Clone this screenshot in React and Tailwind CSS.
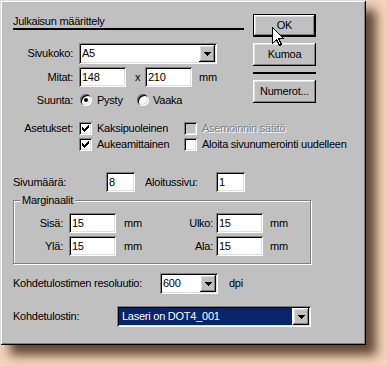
const sunken =
  'bg-white shadow-[inset_1px_1px_0_#808080,inset_-1px_-1px_0_#fff,inset_2px_2px_0_#000,inset_-2px_-2px_0_#dfdfdf]'
const raised =
  'bg-[#c0c0c0] shadow-[inset_-1px_-1px_0_#000,inset_1px_1px_0_#fff,inset_-2px_-2px_0_#808080,inset_2px_2px_0_#dfdfdf]'

function Arrow() {
  return (
    <div className={`${raised} w-[16px] h-full flex items-center justify-center`}>
      <svg width="7" height="4" viewBox="0 0 7 4" shapeRendering="crispEdges">
        <path d="M0 0h7v1H0z M1 1h5v1H1z M2 2h3v1H2z M3 3h1v1H3z" fill="#000" />
      </svg>
    </div>
  )
}

function Combo({ className, children, selected }) {
  return (
    <div className={`${sunken} flex h-[21px] p-[2px] ${className}`}>
      {selected ? (
        <div className="flex-1 flex items-center bg-[#0a246a] text-white pl-[3px] mr-[1px]">{children}</div>
      ) : (
        <div className="flex-1 flex items-center pl-[1px]">{children}</div>
      )}
      <Arrow />
    </div>
  )
}

function Edit({ className, children }) {
  return <div className={`${sunken} h-[20px] flex items-center pl-[3px] ${className}`}>{children}</div>
}

function Check({ checked, disabled }) {
  return (
    <div
      className={`w-[13px] h-[13px] shrink-0 shadow-[inset_1px_1px_0_#808080,inset_-1px_-1px_0_#fff,inset_2px_2px_0_#000,inset_-2px_-2px_0_#dfdfdf] ${
        disabled ? 'bg-[#c0c0c0]' : 'bg-white'
      }`}
    >
      {checked && (
        <svg width="13" height="13" viewBox="0 0 13 13" shapeRendering="crispEdges">
          <path d="M3 5h1v3H3z M4 6h1v3H4z M5 7h1v3H5z M6 6h1v3H6z M7 5h1v3H7z M8 4h1v3H8z M9 3h1v3H9z" fill="#000" />
        </svg>
      )}
    </div>
  )
}

function Radio({ on }) {
  return (
    <div className="w-[12px] h-[12px] shrink-0 rounded-full bg-white flex items-center justify-center shadow-[inset_1px_1px_0_#808080,inset_-1px_-1px_0_#fff,inset_2px_2px_0_#000,inset_-2px_-2px_0_#dfdfdf]">
      {on && <div className="w-[4px] h-[4px] rounded-full bg-black" />}
    </div>
  )
}

function Button({ children }) {
  return (
    <div className={`${raised} h-[23px] w-[63px] flex items-center justify-center`}>{children}</div>
  )
}

export default function App() {
  return (
    <div className="w-[387px] h-[366px] bg-[#f3d3b9] overflow-hidden font-['Liberation_Sans',Arial,sans-serif] text-[11px] leading-[13px] tracking-[-0.25px] text-black">
      <div className="relative w-[366px] h-[345px] bg-[#c0c0c0] pl-[13px] pt-[14px] shadow-[inset_1px_1px_0_#dfdfdf,inset_-1px_-1px_0_#000,inset_2px_2px_0_#fff,inset_-2px_-2px_0_#808080,10px_10px_10px_rgba(60,35,20,0.8)]">
        <div className="flex">
          <div className="w-[231px]">
            <div className="h-[16px] leading-[14px] border-b-2 border-black">Julkaisun määrittely</div>

            <div className="flex items-center h-[21px] mt-[13px]">
              <span className="w-[60px] text-right">Sivukoko:</span>
              <Combo className="ml-[6px] w-[138px]">A5</Combo>
            </div>

            <div className="flex items-center h-[20px] mt-[3px]">
              <span className="w-[60px] text-right">Mitat:</span>
              <Edit className="ml-[6px] w-[47px]">148</Edit>
              <span className="ml-[9px] w-[10px]">x</span>
              <Edit className="w-[47px]">210</Edit>
              <span className="ml-[7px]">mm</span>
            </div>

            <div className="flex items-center h-[14px] mt-[6px]">
              <span className="w-[60px] text-right">Suunta:</span>
              <div className="ml-[7px] w-[57px] flex items-center">
                <Radio on />
                <span className="ml-[5px]">Pysty</span>
              </div>
              <Radio />
              <span className="ml-[4px]">Vaaka</span>
            </div>
          </div>

          <div className="ml-[9px] flex flex-col">
            <div className="border border-black">
              <div className={`${raised} h-[21px] w-[61px] flex items-center justify-center`}>OK</div>
            </div>
            <div className="mt-[6px]">
              <Button>Kumoa</Button>
            </div>
            <div className="mt-[6px] h-[2px] w-[63px] bg-black" />
            <div className="mt-[6px]">
              <Button>Numerot...</Button>
            </div>
          </div>
        </div>

        <div className="mt-[13px]">
          <div className="flex items-center h-[16px]">
            <span className="w-[60px] text-right">Asetukset:</span>
            <div className="ml-[6px] w-[105px] flex items-center">
              <Check checked />
              <span className="ml-[5px]">Kaksipuoleinen</span>
            </div>
            <Check disabled />
            <span className="ml-[5px] text-[#808080] [text-shadow:1px_1px_0_#fff]">Asemoinnin säätö</span>
          </div>
          <div className="flex items-center h-[16px]">
            <div className="ml-[66px] w-[105px] flex items-center">
              <Check checked />
              <span className="ml-[5px]">Aukeamittainen</span>
            </div>
            <Check />
            <span className="ml-[5px]">Aloita sivunumerointi uudelleen</span>
          </div>
        </div>

        <div className="flex items-center h-[20px] mt-[20px]">
          <span className="w-[93px]">Sivumäärä:</span>
          <Edit className="w-[29px]">8</Edit>
          <span className="ml-[10px] w-[71px]">Aloitussivu:</span>
          <Edit className="w-[29px]">1</Edit>
        </div>

        <div className="relative mt-[8px] w-[298px] h-[64px] border border-[#808080] shadow-[1px_1px_0_#fff,inset_1px_1px_0_#fff]">
          <span className="absolute left-[6px] top-[-7px] px-[2px] bg-[#c0c0c0]">Marginaalit</span>
          <div className="flex items-center h-[20px] mt-[12px]">
            <span className="w-[49px] text-right">Sisä:</span>
            <Edit className="ml-[6px] w-[47px]">15</Edit>
            <span className="ml-[8px] w-[24px]">mm</span>
            <span className="w-[65px] text-right">Ulko:</span>
            <Edit className="ml-[3px] w-[47px]">15</Edit>
            <span className="ml-[7px]">mm</span>
          </div>
          <div className="flex items-center h-[20px] mt-[3px]">
            <span className="w-[49px] text-right">Ylä:</span>
            <Edit className="ml-[6px] w-[47px]">15</Edit>
            <span className="ml-[8px] w-[24px]">mm</span>
            <span className="w-[65px] text-right">Ala:</span>
            <Edit className="ml-[3px] w-[47px]">15</Edit>
            <span className="ml-[7px]">mm</span>
          </div>
        </div>

        <div className="flex items-center h-[21px] mt-[9px]">
          <span className="w-[147px]">Kohdetulostimen resoluutio:</span>
          <Combo className="w-[58px]">600</Combo>
          <span className="ml-[11px]">dpi</span>
        </div>

        <div className="flex items-center h-[21px] mt-[12px]">
          <span className="w-[104px]">Kohdetulostin:</span>
          <Combo className="w-[194px]" selected>
            Laseri on DOT4_001
          </Combo>
        </div>

        <svg
          className="absolute left-[272px] top-[27px]"
          width="13"
          height="20"
          viewBox="0 0 13 20"
          shapeRendering="crispEdges"
        >
          <path d="M0.5 0.5 L0.5 16.5 L4.5 12.5 L7.5 18.5 L9.5 17.5 L6.5 11.5 L11.5 11.5 Z" fill="#fff" stroke="#000" strokeWidth="1" />
        </svg>
      </div>
    </div>
  )
}
